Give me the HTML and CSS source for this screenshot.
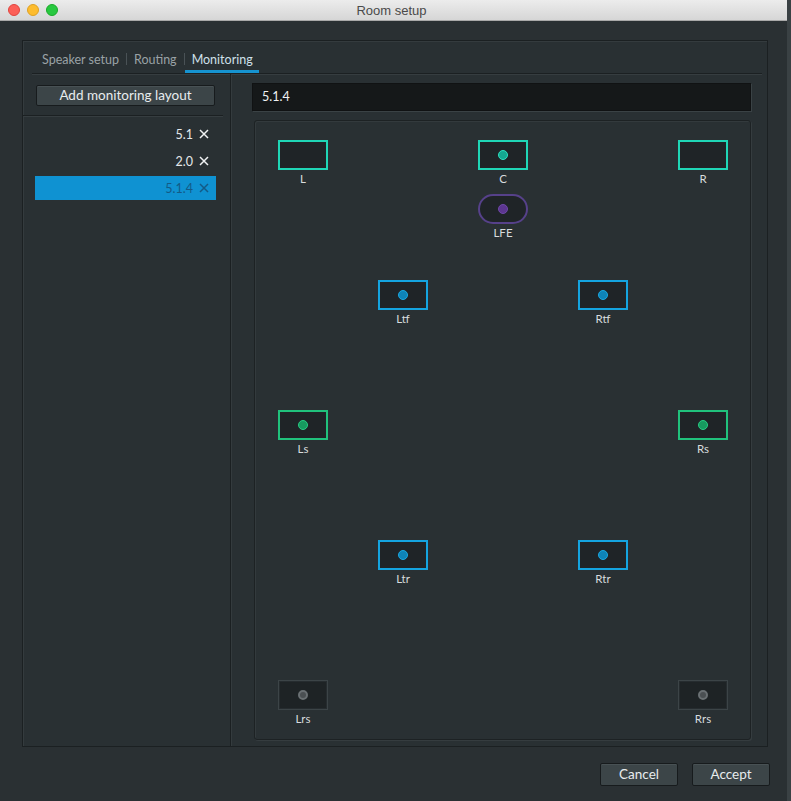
FILE: index.html
```html
<!DOCTYPE html>
<html>
<head>
<meta charset="utf-8">
<link rel="stylesheet" href="styles.css">
</head>
<body>
<div class="window">
  <div class="titlebar">
    <div class="lights">
      <span class="light tl-red"></span>
      <span class="light tl-yellow"></span>
      <span class="light tl-green"></span>
    </div>
    <div class="title">Room setup</div>
  </div>
  <div class="main">
    <div class="panel">
      <div class="tabs">
        <span class="tab">Speaker setup</span>
        <span class="tab-sep"></span>
        <span class="tab">Routing</span>
        <span class="tab-sep"></span>
        <span class="tab active">Monitoring</span>
      </div>
      <div class="body">
        <div class="left">
          <div class="btn-wrap"><button class="btn wide">Add monitoring layout</button></div>
          <div class="list">
            <div class="row"><span>5.1</span><svg class="x" viewBox="0 0 10 10"><path d="M1 1L9 9M9 1L1 9"/></svg></div>
            <div class="row"><span>2.0</span><svg class="x" viewBox="0 0 10 10"><path d="M1 1L9 9M9 1L1 9"/></svg></div>
            <div class="row selected"><span>5.1.4</span><svg class="x" viewBox="0 0 10 10"><path d="M1 1L9 9M9 1L1 9"/></svg></div>
          </div>
        </div>
        <div class="right">
          <div class="input">5.1.4</div>
          <div class="canvas">
            <div class="spk teal" style="left:23px;top:19px"><div class="box"></div><div class="lbl">L</div></div>
            <div class="spk teal" style="left:223px;top:19px"><div class="box"><i class="dot"></i></div><div class="lbl">C</div></div>
            <div class="spk teal" style="left:423px;top:19px"><div class="box"></div><div class="lbl">R</div></div>
            <div class="spk purple" style="left:223px;top:73px"><div class="box pill"><i class="dot"></i></div><div class="lbl">LFE</div></div>
            <div class="spk blue" style="left:123px;top:159px"><div class="box"><i class="dot"></i></div><div class="lbl">Ltf</div></div>
            <div class="spk blue" style="left:323px;top:159px"><div class="box"><i class="dot"></i></div><div class="lbl">Rtf</div></div>
            <div class="spk green" style="left:23px;top:289px"><div class="box"><i class="dot"></i></div><div class="lbl">Ls</div></div>
            <div class="spk green" style="left:423px;top:289px"><div class="box"><i class="dot"></i></div><div class="lbl">Rs</div></div>
            <div class="spk blue" style="left:123px;top:419px"><div class="box"><i class="dot"></i></div><div class="lbl">Ltr</div></div>
            <div class="spk blue" style="left:323px;top:419px"><div class="box"><i class="dot"></i></div><div class="lbl">Rtr</div></div>
            <div class="spk gray" style="left:23px;top:559px"><div class="box"><i class="dot"></i></div><div class="lbl">Lrs</div></div>
            <div class="spk gray" style="left:423px;top:559px"><div class="box"><i class="dot"></i></div><div class="lbl">Rrs</div></div>
          </div>
        </div>
      </div>
    </div>
    <div class="footer">
      <button class="btn foot">Cancel</button>
      <button class="btn foot">Accept</button>
    </div>
  </div>
</div>
</body>
</html>
```
FILE: styles.css
```css
* { box-sizing: border-box; }
html, body { margin: 0; padding: 0; }
body {
  width: 791px;
  height: 801px;
  overflow: hidden;
  background: #2a3033;
  font-family: Lato, "Open Sans", sans-serif;
  color: #e6e9ea;
}
.window {
  width: 791px;
  height: 801px;
  display: flex;
  flex-direction: column;
  border-right: 4px solid #3a4144;
}
.titlebar {
  height: 21px;
  flex: none;
  background: linear-gradient(#ececec, #d6d6d6);
  border-bottom: 1px solid #a9a9a9;
  display: flex;
  align-items: center;
}
.lights { display: flex; gap: 7px; padding-left: 8px; }
.light { width: 12px; height: 12px; border-radius: 50%; display: block; }
.tl-red { background: #fc5f57; border: 1px solid #e0443e; }
.tl-yellow { background: #fdbc2e; border: 1px solid #dea123; }
.tl-green { background: #28c840; border: 1px solid #1aab29; }
.title {
  flex: 1;
  text-align: center;
  font-family: "Helvetica Neue", "Liberation Sans", Arial, sans-serif;
  font-size: 13px;
  color: #4a4a4a;
  margin-right: 62px;
}
.main {
  flex: 1;
  display: flex;
  flex-direction: column;
  padding: 19px 0 0 22px;
}
.panel {
  width: 746px;
  height: 707px;
  border: 1px solid #1b2022;
  box-shadow: inset 1px 1px 0 #343b3e;
  display: flex;
  flex-direction: column;
  background: #293033;
}
.tabs {
  height: 33px;
  flex: none;
  margin: 0 5px 0 9px;
  padding-left: 10px;
  border-bottom: 1px solid #1b2022;
  box-shadow: 0 1px 0 #363d40;
  display: flex;
  align-items: flex-end;
  font-size: 12.5px;
}
.tab {
  color: #9aa2a6;
  padding: 0 0 6px;
  line-height: 14px;
}
.tab.active {
  color: #cfe0ea;
  border-bottom: 3px solid #1693d0;
  padding: 0 6px 3px 7px;
  margin-left: -7px;
}
.tab-sep {
  width: 1px;
  height: 12px;
  background: #4a5256;
  margin: 0 7px 8px 7px;
}
.body {
  flex: 1;
  display: flex;
}
.left {
  width: 208px;
  flex: none;
  border-right: 1px solid #1b2022;
  box-shadow: 1px 0 0 #343b3e;
}
.btn-wrap {
  padding: 10px 15px 9px 13px;
  border-bottom: 1px solid #1b2022;
  box-shadow: 0 1px 0 #363d40;
  margin-right: 7px;
}
.btn {
  font-family: Lato, "Open Sans", sans-serif;
  background: #3c4548;
  border: 1px solid #171b1d;
  color: #e8ecee;
  border-radius: 2px;
  padding: 0;
  box-shadow: inset 0 1px 0 #485154;
}
.btn.wide {
  width: 179px;
  height: 21px;
  font-size: 13.5px;
  line-height: 19px;
}
.list { padding: 6px 14px 0 12px; display: flex; flex-direction: column; gap: 3px; }
.row {
  height: 24px;
  display: flex;
  justify-content: flex-end;
  align-items: center;
  gap: 6px;
  padding-right: 7px;
  font-size: 12.5px;
  color: #e4e8ea;
}
.row .x { width: 10px; height: 10px; stroke: #f0f2f3; stroke-width: 1.5; fill: none; }
.row.selected {
  background: #0f92d2;
  color: #135a86;
}
.row.selected .x { stroke: #135a86; }
.right {
  flex: 1;
  display: flex;
  flex-direction: column;
  padding: 9px 16px 6px 21px;
}
.input {
  height: 28px;
  flex: none;
  background: #151819;
  border: 1px solid #101213;
  box-shadow: 1px 1px 0 #3a4245;
  color: #f0f2f3;
  font-size: 12.5px;
  line-height: 26px;
  padding-left: 9px;
}
.canvas {
  flex: 1;
  margin: 9px 0 0 2px;
  position: relative;
  border: 1px solid #1d2224;
  border-radius: 3px;
  box-shadow: inset 1px 1px 0 #333a3d, 1px 1px 0 #353c3f;
  background: #293033;
}
.spk {
  position: absolute;
  width: 50px;
  display: flex;
  flex-direction: column;
  align-items: center;
}
.box {
  width: 50px;
  height: 30px;
  border: 2px solid;
  background: #1f2427;
  display: flex;
  align-items: center;
  justify-content: center;
}
.box.pill { border-radius: 15px; }
.dot {
  width: 10px;
  height: 10px;
  border-radius: 50%;
  display: block;
}
.lbl {
  font-size: 11.5px;
  color: #d8dcde;
  margin-top: 3px;
  line-height: 12px;
}
.teal .box { border-color: #1fd6b6; }
.teal .dot { background: #14a890; border: 1px solid #2de0c0; }
.blue .box { border-color: #14a4e0; }
.blue .dot { background: #0e84b8; border: 1px solid #1aa8e0; }
.green .box { border-color: #20c27c; }
.green .dot { background: #179a5f; border: 1px solid #28cc84; }
.purple .box { border-color: #56418a; }
.purple .dot { background: #5c3690; border: 1px solid #6f48a8; }
.gray .box { border: 1px solid #3c4447; background: #1e2325; box-shadow: inset 0 0 0 1px #262c2f; }
.gray .dot { background: #4a4f52; border: 2px solid #6a7073; }
.footer {
  flex: 1;
  display: flex;
  justify-content: flex-end;
  align-items: flex-start;
  gap: 14px;
  padding: 16px 17px 0 0;
}
.btn.foot {
  width: 78px;
  height: 23px;
  font-size: 13.5px;
  line-height: 21px;
}
```
